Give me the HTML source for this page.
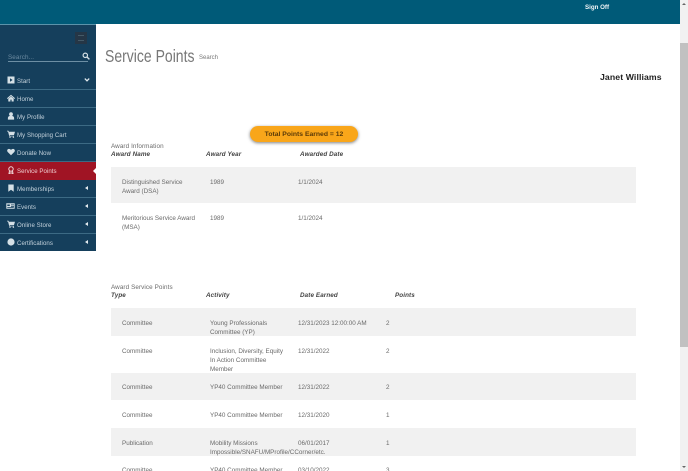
<!DOCTYPE html>
<html><head><meta charset="utf-8"><style>
html,body{margin:0;padding:0;background:#fff;width:688px;height:471px;overflow:hidden}
body{font-family:"Liberation Sans",sans-serif;color:#555;position:relative}
.a{position:absolute;white-space:nowrap}
.t{font-size:6.3px;line-height:9px;color:#6a6a6a;position:absolute;margin-top:1px;white-space:nowrap}
.h{font-size:6.3px;font-weight:bold;font-style:italic;color:#444;position:absolute;margin-top:1px;white-space:nowrap;letter-spacing:.1px}
.g{position:absolute;left:111px;width:525px;background:#f1f1f1}
.m{position:absolute;left:0;width:96px;height:17px;border-bottom:1px solid #3c6a84;background:#153f5c}
.m span{position:absolute;left:17px;top:4.500px;font-size:6.1px;line-height:9px;color:#c4d2dc;letter-spacing:.05px;white-space:nowrap}
.m svg{position:absolute;left:7px;top:4px;width:8px;height:8px;fill:#d5e0e6}
.m i{position:absolute;left:85px;top:6px;width:0;height:0;border-top:2.500px solid transparent;border-bottom:2.500px solid transparent;border-right:3px solid #e4ecf0}
</style></head><body>
<div class="a" style="left:0;top:0;width:680px;height:24px;background:#005a78"></div>
<div class="a" style="left:0;top:24px;width:96px;height:1px;background:#5b93aa"></div>
<div class="a" style="left:585px;top:3.500px;font-size:6.2px;line-height:8px;font-weight:bold;color:#f2f6f8">Sign Off</div>

<div class="a" style="left:0;top:25px;width:96px;height:226px;background:#153f5c"></div>
<div class="a" style="left:75px;top:32px;width:12px;height:12px;background:#253646"></div>
<div class="a" style="left:78px;top:35px;width:6px;height:6px;border-top:1px solid #445a68;border-bottom:1px solid #445a68;box-sizing:border-box"></div>
<div class="a" style="left:8px;top:53px;font-size:6.3px;line-height:9px;color:#6b8aa0;letter-spacing:.1px">Search...</div>
<div class="a" style="left:8px;top:61px;width:80px;height:1px;background:#6d8fa4"></div>
<svg class="a" style="left:82px;top:52px;width:8px;height:8px" viewBox="0 0 8 8"><circle cx="3.3" cy="3.3" r="2.2" fill="none" stroke="#d5e0e6" stroke-width="1.2"/><path d="M5 5L7.4 7.4" stroke="#d5e0e6" stroke-width="1.4"/></svg>

<div class="m" style="top:72px"><svg viewBox="0 0 8 8"><path d="M0.5 0.5h7v7h-7zM3 2.2v3.6l2.6-1.8z" fill-rule="evenodd"/></svg><span>Start</span>
<svg style="left:84px;top:5px;width:6px;height:6px" viewBox="0 0 6 6"><path d="M0.8 1.6L3 3.8L5.2 1.6" fill="none" stroke="#e4ecf0" stroke-width="1.3"/></svg></div>
<div class="m" style="top:90px"><svg viewBox="0 0 8 8"><path d="M4 .8L8 4.3 7.4 5 4 2.1.6 5 0 4.3zM1.3 4.8L4 2.6l2.7 2.2v2.7H4.6V5.6H3.4v1.9H1.3z"/></svg><span>Home</span></div>
<div class="m" style="top:108px"><svg viewBox="0 0 8 8"><circle cx="4" cy="2.2" r="1.9"/><path d="M.9 7.6V6c0-1.3 1-2 2-2h2.2c1 0 2 .7 2 2v1.6z"/></svg><span>My Profile</span></div>
<div class="m" style="top:126px"><svg viewBox="0 0 8 8"><path d="M0 .8h1.500l.4 1H8L7 5H2.700l.2.7H7v.7H2.300L1 1.500H0z"/><circle cx="3" cy="7.200" r=".7"/><circle cx="6.400" cy="7.200" r=".7"/></svg><span>My Shopping Cart</span></div>
<div class="m" style="top:144px"><svg viewBox="0 0 8 8"><path d="M4 7.300L.7 4C-.5 2.700.4.900 2 .9c.9 0 1.600.5 2 1.100C4.400 1.400 5.100.9 6 .9c1.600 0 2.500 1.800 1.300 3.100z"/></svg><span>Donate Now</span></div>
<div class="m" style="top:162px;height:18px;border:0;background:#a01424"><svg style="fill:none;stroke:#f0d8da;stroke-width:1" viewBox="0 0 8 8"><circle cx="4" cy="3" r="2.200"/><path d="M2.500 5L2 7.700 4 6.800 6 7.700 5.500 5"/></svg><span style="color:#f0cfd3">Service Points</span></div>
<div class="a" style="left:93px;top:167px;width:0;height:0;border-top:4px solid transparent;border-bottom:4px solid transparent;border-right:4px solid #fff"></div>
<div class="m" style="top:180px"><svg viewBox="0 0 8 8"><path d="M1.300 .5h5.400v7.200L4 5.700 1.300 7.700z"/></svg><span>Memberships</span><i></i></div>
<div class="m" style="top:198px"><svg style="width:9px;left:6px" viewBox="0 0 9 8"><path d="M.3 1.300h8.400v5.400H.3zM1.300 2.500v1.500h2.500V2.500zM5 2.500v.7h3v-.7zM5 4v.7h3V4zM1.300 5v.7h6.500V5z" fill-rule="evenodd"/></svg><span>Events</span><i></i></div>
<div class="m" style="top:216px"><svg viewBox="0 0 8 8"><path d="M0 .8h1.500l.4 1H8L7 5H2.700l.2.7H7v.7H2.300L1 1.500H0z"/><circle cx="3" cy="7.200" r=".7"/><circle cx="6.400" cy="7.200" r=".7"/></svg><span>Online Store</span><i></i></div>
<div class="m" style="top:234px;border:0"><svg viewBox="0 0 8 8"><circle cx="4" cy="4" r="3.600"/></svg><span>Certifications</span><i></i></div>

<div class="a" style="left:105px;top:44px;font-size:17.500px;line-height:24px;color:#777;transform:scaleX(.8);transform-origin:0 0">Service Points</div>
<div class="a" style="left:199px;top:54px;font-size:6px;line-height:9px;color:#777">Search</div>
<div class="a" style="left:600px;top:71px;font-size:8.700px;line-height:12px;font-weight:bold;color:#222;letter-spacing:.1px">Janet Williams</div>

<div class="a" style="left:250px;top:126px;width:108px;height:16px;border-radius:8px;background:#f9a61a;box-shadow:0 1px 3px rgba(0,0,0,.5);text-align:center;font-size:6.800px;line-height:16px;font-weight:bold;color:#5a3a08;padding-top:1px;box-sizing:border-box">Total Points Earned = 12</div>

<div class="t" style="left:111px;top:141px;letter-spacing:.1px">Award Information</div>
<div class="h" style="left:111px;top:150px">Award Name</div>
<div class="h" style="left:206px;top:150px">Award Year</div>
<div class="h" style="left:300px;top:150px">Awarded Date</div>
<div class="g" style="top:167px;height:36px"></div>
<div class="t" style="left:122px;top:177px">Distinguished Service<br>Award (DSA)</div>
<div class="t" style="left:210px;top:177px">1989</div>
<div class="t" style="left:298px;top:177px">1/1/2024</div>
<div class="t" style="left:122px;top:213px">Meritorious Service Award<br>(MSA)</div>
<div class="t" style="left:210px;top:213px">1989</div>
<div class="t" style="left:298px;top:213px">1/1/2024</div>

<div class="t" style="left:111px;top:282px;letter-spacing:.1px">Award Service Points</div>
<div class="h" style="left:111px;top:291px">Type</div>
<div class="h" style="left:206px;top:291px">Activity</div>
<div class="h" style="left:300px;top:291px">Date Earned</div>
<div class="h" style="left:395px;top:291px">Points</div>

<div class="g" style="top:308px;height:28px"></div>
<div class="g" style="top:373px;height:27px"></div>
<div class="g" style="top:428px;height:28px"></div>

<div class="t" style="left:122px;top:318px">Committee</div>
<div class="t" style="left:210px;top:318px">Young Professionals<br>Committee (YP)</div>
<div class="t" style="left:298px;top:318px">12/31/2023 12:00:00 AM</div>
<div class="t" style="left:386px;top:318px">2</div>

<div class="t" style="left:122px;top:346px">Committee</div>
<div class="t" style="left:210px;top:346px">Inclusion, Diversity, Equity<br>In Action Committee<br>Member</div>
<div class="t" style="left:298px;top:346px">12/31/2022</div>
<div class="t" style="left:386px;top:346px">2</div>

<div class="t" style="left:122px;top:382px">Committee</div>
<div class="t" style="left:210px;top:382px">YP40 Committee Member</div>
<div class="t" style="left:298px;top:382px">12/31/2022</div>
<div class="t" style="left:386px;top:382px">2</div>

<div class="t" style="left:122px;top:410px">Committee</div>
<div class="t" style="left:210px;top:410px">YP40 Committee Member</div>
<div class="t" style="left:298px;top:410px">12/31/2020</div>
<div class="t" style="left:386px;top:410px">1</div>

<div class="t" style="left:122px;top:438px">Publication</div>
<div class="t" style="left:210px;top:438px">Mobility Missions<br>Impossible/SNAFU/MProfile/CCorner/etc.</div>
<div class="t" style="left:298px;top:438px">06/01/2017</div>
<div class="t" style="left:386px;top:438px">1</div>

<div class="t" style="left:122px;top:465px">Committee</div>
<div class="t" style="left:210px;top:465px">YP40 Committee Member</div>
<div class="t" style="left:298px;top:465px">03/10/2022</div>
<div class="t" style="left:386px;top:465px">3</div>

<div class="a" style="left:680px;top:0;width:8px;height:471px;background:#f1f1f1"></div>
<div class="a" style="left:680px;top:43px;width:8px;height:304px;background:#c1c1c1"></div>
<div class="a" style="left:682px;top:3px;width:0;height:0;border-left:2px solid transparent;border-right:2px solid transparent;border-bottom:2px solid #666"></div>
<div class="a" style="left:682px;top:466px;width:0;height:0;border-left:2px solid transparent;border-right:2px solid transparent;border-top:2px solid #666"></div>
</body></html>
